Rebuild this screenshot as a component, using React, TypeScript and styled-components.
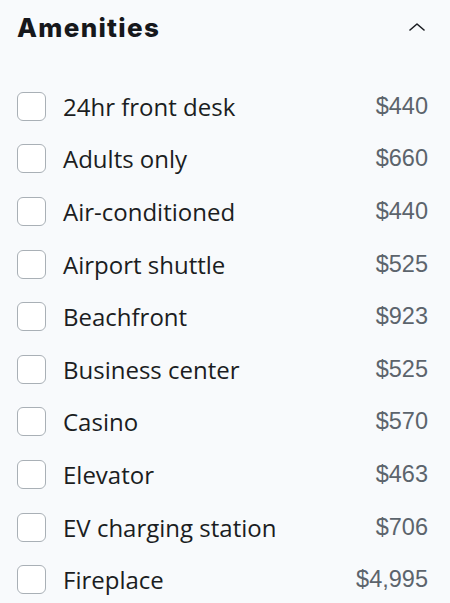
import React from "react";
import styled, { createGlobalStyle } from "styled-components";

const Global = createGlobalStyle`
  html, body { margin: 0; padding: 0; background: #f8fafc; }
  body { font-family: "Open Sans", "Noto Sans", sans-serif; }
`;

const Panel = styled.section`
  width: 450px;
  height: 603px;
  box-sizing: border-box;
  padding: 10px 22px 0 17px;
  background: #f8fafc;
  overflow: hidden;
`;

const Header = styled.div`
  display: flex;
  align-items: center;
  justify-content: space-between;
  height: 34px;
  margin-bottom: 36px;
`;

const Title = styled.h2`
  margin: 0;
  font-family: "Inter", sans-serif;
  font-weight: 800;
  font-size: 26px;
  letter-spacing: 1.3px;
  color: #16181c;
`;

const Toggle = styled.button`
  border: 0;
  background: transparent;
  padding: 0;
  margin-right: 3px;
  display: flex;
  align-items: center;
  cursor: pointer;
`;

const List = styled.ul`
  list-style: none;
  margin: 0;
  padding: 0;
`;

const Row = styled.li`
  display: flex;
  align-items: center;
  height: 52.6px;
`;

const Box = styled.span`
  width: 27px;
  height: 27px;
  flex: none;
  border: 1px solid #a9b0b6;
  border-radius: 6px;
  background: #ffffff;
  margin-right: 17px;
`;

const Label = styled.span`
  flex: 1;
  font-family: "Open Sans", sans-serif;
  font-size: 24px;
  color: #1b1d22;
`;

const Price = styled.span`
  font-family: "Liberation Sans", Arial, sans-serif;
  font-size: 23.5px;
  color: #5c646c;
`;

const items: [string, string][] = [
  ["24hr front desk", "$440"],
  ["Adults only", "$660"],
  ["Air-conditioned", "$440"],
  ["Airport shuttle", "$525"],
  ["Beachfront", "$923"],
  ["Business center", "$525"],
  ["Casino", "$570"],
  ["Elevator", "$463"],
  ["EV charging station", "$706"],
  ["Fireplace", "$4,995"],
];

export default function App() {
  return (
    <>
      <Global />
      <Panel>
        <Header>
          <Title>Amenities</Title>
          <Toggle aria-label="Collapse">
            <svg width="16" height="8" viewBox="0 0 16 8" fill="none">
              <path d="M1 7 L8 1 L15 7" stroke="#1b1d22" strokeWidth="1.6" strokeLinecap="round" strokeLinejoin="round" />
            </svg>
          </Toggle>
        </Header>
        <List>
          {items.map(([name, price]) => (
            <Row key={name}>
              <Box />
              <Label>{name}</Label>
              <Price>{price}</Price>
            </Row>
          ))}
        </List>
      </Panel>
    </>
  );
}
